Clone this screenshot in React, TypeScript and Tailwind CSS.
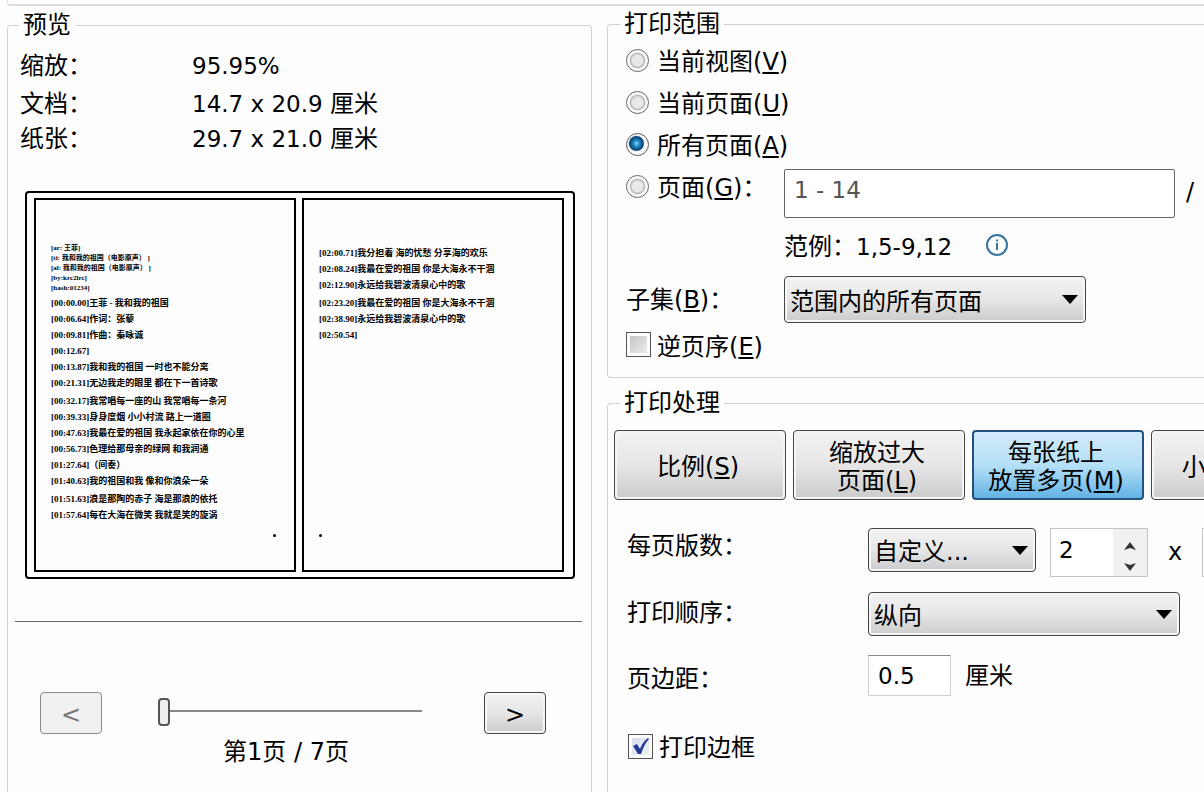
import type { ReactNode } from 'react'
import clsx from 'clsx'

const RANGES = [
  { id: 'view', label: '当前视图', hotkey: 'V' },
  { id: 'current', label: '当前页面', hotkey: 'U' },
  { id: 'all', label: '所有页面', hotkey: 'A' }
]

const MODES = [
  { id: 'scale', lines: ['比例'], hotkey: 'S' },
  { id: 'shrink', lines: ['缩放过大', '页面'], hotkey: 'L' },
  { id: 'multiple', lines: ['每张纸上', '放置多页'], hotkey: 'M' },
  { id: 'booklet', lines: ['小册子'], hotkey: 'K' }
]

const TAGS = ['[ar: 王菲]', '[ti: 我和我的祖国（电影原声） ]', '[al: 我和我的祖国（电影原声） ]', '[by:krc2lrc]', '[hash:01234]']

// Thumbnail text, one inner list for each block of lines
const LEFT_PAGE = [
  [
    '[00:00.00]王菲 - 我和我的祖国',
    '[00:06.64]作词：张藜',
    '[00:09.81]作曲：秦咏诚',
    '[00:12.67]',
    '[00:13.87]我和我的祖国 一时也不能分离',
    '[00:21.31]无边我走的眼里 都在下一首诗歌'
  ],
  [
    '[00:32.17]我常唱每一座的山 我常唱每一条河',
    '[00:39.33]身身度烟 小小村流 路上一道圈',
    '[00:47.63]我最在爱的祖国 我永起家依在你的心里',
    '[00:56.73]色理给那母亲的绿网 和我润通',
    '[01:27.64]（间奏）',
    '[01:40.63]我的祖国和我 像和你浪朵一朵'
  ],
  ['[01:51.63]浪是那陶的赤子 海是那浪的依托', '[01:57.64]每在大海在微笑 我就是笑的旋涡']
]

const RIGHT_PAGE = [
  [
    '[02:00.71]我分担着 海的忧愁 分享海的欢乐',
    '[02:08.24]我最在爱的祖国 你是大海永不干涸',
    '[02:12.90]永远给我碧波清泉心中的歌'
  ],
  [
    '[02:23.20]我最在爱的祖国 你是大海永不干涸',
    '[02:38.90]永远给我碧波清泉心中的歌',
    '[02:50.54]'
  ]
]

const raised =
  'rounded border border-[#444] bg-linear-to-b from-[#f3f3f3] via-[#e6e6e6] to-[#cbcbcb] shadow-[inset_0_0_0_2px_#f6f6f6]'

function Hotkey({ letter }: { letter: string }) {
  return (
    <>
      (<span className="underline decoration-2 underline-offset-2">{letter}</span>)
    </>
  )
}

function Num({ children }: { children: ReactNode }) {
  return <span className="text-[23px]">{children}</span>
}

function RangeRadio({ id, checked }: { id: string; checked?: boolean }) {
  return (
    <input
      type="radio"
      name="range"
      id={id}
      defaultChecked={checked}
      className="mb-1 size-[23px] shrink-0 appearance-none rounded-full border border-[#666] bg-[radial-gradient(circle,#e8e8e8_0_35%,#b5b5b5_48%,#fbfbfb_56%)] checked:border-[#555] checked:bg-[radial-gradient(circle_at_45%_45%,#7fd4f5_0,#1e86c0_20%,#0b3f73_42%,#fdfdfd_50%)]"
    />
  )
}

function CheckBox({ id, checked }: { id: string; checked?: boolean }) {
  return (
    <span className="relative mb-1 size-[25px] shrink-0">
      <input
        type="checkbox"
        id={id}
        defaultChecked={checked}
        className="peer block size-[25px] appearance-none border border-[#555] bg-linear-to-br from-[#bdbdbd] to-[#f4f4f4] shadow-[inset_0_0_0_3px_#fcfcfc] checked:from-[#d3dcea]"
      />
      <svg
        viewBox="0 0 25 25"
        className="pointer-events-none absolute inset-0 hidden peer-checked:block"
        fill="#26399a"
      >
        <path d="M5 12l4-2 3 5c2-5 4-8 8-11l1 1c-4 4-6 9-8 15h-3z" />
      </svg>
    </span>
  )
}

interface DropDownProps {
  id: string
  value: string
  className: string
}

function DropDown({ id, value, className }: DropDownProps) {
  return (
    <div className={clsx('relative', className)}>
      <select id={id} className={clsx(raised, 'size-full appearance-none pt-1 pr-9 pl-[5px]')}>
        <option>{value}</option>
      </select>
      <svg
        viewBox="0 0 16 9"
        className="pointer-events-none absolute inset-y-0 right-2 my-auto h-[9px] w-4"
      >
        <path d="M0 0h16L8 9z" />
      </svg>
    </div>
  )
}

function SheetPage({ tags, blocks, side }: { tags?: string[]; blocks: string[][]; side: 'left' | 'right' }) {
  return (
    <div
      className={clsx(
        'flex min-w-0 flex-col overflow-hidden border-2 border-black pb-[33px] font-["Liberation_Serif","Noto_Sans_CJK_SC",serif] text-[9px] leading-4 font-bold whitespace-nowrap',
        side === 'left' ? 'pt-[43px] pr-[18px] pl-[15px]' : 'px-[15px] pt-[45px]'
      )}
    >
      {tags && (
        <div className="mb-0.5 text-[7px] leading-[10px]">
          {tags.map((tag) => (
            <p key={tag}>{tag}</p>
          ))}
        </div>
      )}
      {blocks.map((block, i) => (
        <div key={i} className="mb-0.5">
          {block.map((line) => (
            <p key={line}>{line}</p>
          ))}
        </div>
      ))}
      <span className={clsx('mt-auto size-[3px] rounded-full bg-black', side === 'left' && 'self-end')} />
    </div>
  )
}

function PreviewPanel() {
  return (
    <fieldset className="min-w-0 rounded-t border border-b-0 border-[#d2d2d2]">
      <legend className="ml-[11px] px-1 leading-[26px]">预览</legend>

      <dl className="mt-[9px] ml-3 grid grid-cols-[172px_1fr] grid-rows-[38px_38px_32px] items-center">
        <dt>缩放：</dt>
        <dd>
          <Num>95.95%</Num>
        </dd>
        <dt>文档：</dt>
        <dd>
          <Num>14.7 x 20.9 </Num>厘米
        </dd>
        <dt>纸张：</dt>
        <dd>
          <Num>29.7 x 21.0 </Num>厘米
        </dd>
      </dl>

      <div className="mt-9 mr-4 ml-[17px] grid aspect-[550/388] grid-cols-2 gap-1.5 rounded-sm border-2 border-black py-[5px] pr-[9px] pl-[7px]">
        <SheetPage side="left" tags={TAGS} blocks={LEFT_PAGE} />
        <SheetPage side="right" blocks={RIGHT_PAGE} />
      </div>

      <hr className="mt-[42px] mr-[9px] ml-[7px] border-[#6a6a6a]" />

      <div className="mt-[70px] mr-[45px] ml-8 flex items-start">
        <button
          type="button"
          disabled
          aria-label="上一页"
          className="h-[42px] w-[62px] rounded border border-[#8c8c8c] bg-[#f1f1f1] pt-1 text-[#777]"
        >
          &lt;
        </button>
        <div className="mr-[62px] ml-14 flex flex-1 flex-col">
          <input
            type="range"
            aria-label="预览页"
            min={1}
            max={7}
            defaultValue={1}
            className="mb-1 h-[38px] w-full appearance-none bg-transparent [&::-webkit-slider-runnable-track]:h-0.5 [&::-webkit-slider-runnable-track]:bg-[#8a8a8a] [&::-webkit-slider-thumb]:-mt-3 [&::-webkit-slider-thumb]:h-7 [&::-webkit-slider-thumb]:w-3 [&::-webkit-slider-thumb]:appearance-none [&::-webkit-slider-thumb]:rounded [&::-webkit-slider-thumb]:border-2 [&::-webkit-slider-thumb]:border-[#555] [&::-webkit-slider-thumb]:bg-[#eee]"
          />
          <output className="pr-2 text-center leading-9">第1页 / 7页</output>
        </div>
        <button type="button" aria-label="下一页" className={clsx(raised, 'h-[42px] w-[62px] pt-1')}>
          &gt;
        </button>
      </div>
    </fieldset>
  )
}

function RangePanel() {
  return (
    <fieldset className="min-w-0 rounded-l border border-r-0 border-[#d2d2d2] pb-2 pl-[18px]">
      <legend className="-ml-1.5 px-1 leading-6">打印范围</legend>

      <div className="mt-[5px]">
        {RANGES.map((range) => (
          <div key={range.id} className="flex h-[42px] items-center gap-2">
            <RangeRadio id={range.id} checked={range.id === 'all'} />
            <label htmlFor={range.id}>
              {range.label}
              <Hotkey letter={range.hotkey} />
            </label>
          </div>
        ))}
      </div>

      <div className="grid grid-cols-[158px_1fr]">
        <div className="flex h-[42px] items-center gap-2">
          <RangeRadio id="pages" />
          <label htmlFor="pages" className="whitespace-nowrap">
            页面
            <Hotkey letter="G" />：
          </label>
        </div>
        <div className="mt-0.5 flex">
          <input
            aria-label="页面范围"
            defaultValue="1 - 14"
            className="h-[49px] min-w-0 flex-1 rounded-xs border border-[#666] bg-white px-[9px] pb-2 text-[23px] text-[#555]"
          />
          <span className="w-[29px] pl-[11px] leading-[46px]">/</span>
        </div>
        <p className="col-start-2 flex h-[58px] items-center">
          范例：<Num>1,5-9,12</Num>
          <svg viewBox="0 0 24 24" className="mb-1 ml-[33px] size-6" fill="none" stroke="#35759f" strokeWidth="2">
            <circle cx="12" cy="12" r="10" />
            <path d="M12 10v7M12 6.500v2" />
          </svg>
        </p>
        <label htmlFor="subset" className="leading-[48px]">
          子集
          <Hotkey letter="B" />：
        </label>
        <DropDown id="subset" value="范围内的所有页面" className="h-[47px] w-[302px]" />
      </div>

      <div className="flex h-[45px] items-center gap-1.5">
        <CheckBox id="reverse" />
        <label htmlFor="reverse">
          逆页序
          <Hotkey letter="E" />
        </label>
      </div>
    </fieldset>
  )
}

function HandlingPanel() {
  return (
    <fieldset className="mt-[13px] min-w-0 flex-1 rounded-tl border border-r-0 border-b-0 border-[#d2d2d2]">
      <legend className="ml-3 px-1 leading-6">打印处理</legend>

      <div className="mt-[15px] flex gap-[7px] overflow-hidden pl-1.5">
        {MODES.map((mode) => (
          <button
            key={mode.id}
            type="button"
            aria-pressed={mode.id === 'multiple'}
            className={clsx(
              'h-[70px] w-[172px] shrink-0 pt-1 pr-1 leading-7',
              mode.id === 'multiple'
                ? 'rounded border-2 border-[#24527d] bg-linear-to-b from-[#d3eaf8] via-[#b5e0f7] to-[#62b3e4]'
                : raised
            )}
          >
            {mode.lines.map((line, i) => (
              <span key={line} className="block">
                {line}
                {i === mode.lines.length - 1 && <Hotkey letter={mode.hotkey} />}
              </span>
            ))}
          </button>
        ))}
      </div>

      <div className="mt-7 grid grid-cols-[241px_1fr] items-start pl-[19px]">
        <label htmlFor="per-sheet" className="leading-9">
          每页版数：
        </label>
        <div className="flex items-start overflow-hidden">
          <DropDown id="per-sheet" value="自定义..." className="h-11 w-[168px] shrink-0" />
          <div className="ml-3.5 flex h-[49px] w-[98px] shrink-0 border border-[#c4c4c4] bg-white">
            <input
              aria-label="列数"
              defaultValue="2"
              className="w-[62px] px-2 pb-1 text-[23px] outline-none"
            />
            <div className="flex flex-1 flex-col bg-[#f1f1f1]">
              <button type="button" aria-label="增加" className="flex flex-1 items-center justify-center pt-2">
                <svg viewBox="0 0 12 8" className="h-2 w-3">
                  <path d="M0 8l6-8 6 8-6-2z" fill="#333" />
                </svg>
              </button>
              <button type="button" aria-label="减少" className="flex flex-1 items-center justify-center pt-1">
                <svg viewBox="0 0 12 8" className="h-2 w-3">
                  <path d="M0 0l6 8 6-8-6 2z" fill="#333" />
                </svg>
              </button>
            </div>
          </div>
          <span className="ml-5 shrink-0 leading-[48px]">x</span>
          <input
            aria-label="行数"
            defaultValue="1"
            className="ml-5 h-[49px] w-[98px] shrink-0 border border-[#c4c4c4] bg-white px-2"
          />
        </div>
      </div>

      <div className="mt-[15px] grid grid-cols-[241px_1fr] items-start pl-[19px]">
        <label htmlFor="order" className="leading-[42px]">
          打印顺序：
        </label>
        <DropDown id="order" value="纵向" className="mr-6 h-11" />
      </div>

      <div className="mt-[19px] grid grid-cols-[241px_1fr] items-start pl-[19px]">
        <label htmlFor="margin" className="leading-[48px]">
          页边距：
        </label>
        <div className="flex items-center gap-3.5">
          <input
            id="margin"
            defaultValue="0.5"
            className="h-[41px] w-[83px] border border-[#d0d0d0] border-t-[#888] bg-white px-[9px] text-[23px]"
          />
          <span>厘米</span>
        </div>
      </div>

      <div className="mt-[22px] flex h-[46px] items-center gap-1.5 pl-5">
        <CheckBox id="border" checked />
        <label htmlFor="border">打印边框</label>
      </div>
    </fieldset>
  )
}

export default function App() {
  return (
    <main className="flex h-screen flex-col overflow-hidden bg-[#fdfdfd] font-['DejaVu_Sans','Noto_Sans_CJK_SC',sans-serif] text-2xl text-black">
      <div className="ml-[7px] h-1.5 shrink-0 rounded-bl border-b-2 border-l border-[#dcdcdc]" />
      <div className="mt-1.5 grid flex-1 grid-cols-[49fr_50fr] gap-[15px] pl-[7px]">
        <PreviewPanel />
        <div className="flex min-w-0 flex-col">
          <RangePanel />
          <HandlingPanel />
        </div>
      </div>
    </main>
  )
}
